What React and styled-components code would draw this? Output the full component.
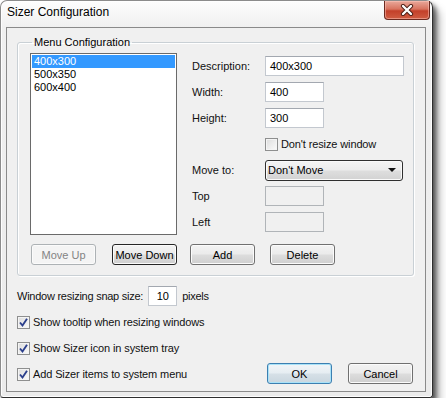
import React from 'react'
import styled, { createGlobalStyle, css } from 'styled-components'

const GlobalStyle = createGlobalStyle`
  html, body {
    margin: 0;
    padding: 0;
    background: #ffffff;
  }
  body {
    font-family: "Liberation Sans", Arial, sans-serif;
    font-size: 11px;
    color: #111;
  }
`

const sizes = ['400x300', '500x350', '600x400']

const App = () => {
  return (
    <>
      <GlobalStyle />
      <Window>
        <TitleBar>
          <Title>Sizer Configuration</Title>
          <CloseButton>
            <svg width="14" height="12" viewBox="0 0 14 12">
              <path d="M3 2 L11 10 M11 2 L3 10" stroke="#4a1d14" strokeWidth="4.2" strokeLinecap="round" />
              <path d="M3 2 L11 10 M11 2 L3 10" stroke="#ffffff" strokeWidth="2.4" strokeLinecap="round" />
            </svg>
          </CloseButton>
        </TitleBar>
        <Client>
          <Group>
            <Legend>Menu Configuration</Legend>
            <GroupGrid>
              <ListBox>
                {sizes.map((s, i) => (
                  <ListItem key={s} selected={i === 0}>{s}</ListItem>
                ))}
              </ListBox>
              <Form>
                <FormRow>
                  <Label>Description:</Label>
                  <TextBox width={139}>400x300</TextBox>
                </FormRow>
                <FormRow>
                  <Label>Width:</Label>
                  <TextBox width={59}>400</TextBox>
                </FormRow>
                <FormRow>
                  <Label>Height:</Label>
                  <TextBox width={59}>300</TextBox>
                </FormRow>
                <FormRow>
                  <Label />
                  <CheckRow>
                    <CheckBox />
                    <span>Don't resize window</span>
                  </CheckRow>
                </FormRow>
                <FormRow>
                  <Label>Move to:</Label>
                  <ComboBox>
                    <span>Don't Move</span>
                    <Arrow />
                  </ComboBox>
                </FormRow>
                <FormRow>
                  <Label>Top</Label>
                  <TextBox width={59} disabled />
                </FormRow>
                <FormRow>
                  <Label>Left</Label>
                  <TextBox width={59} disabled />
                </FormRow>
              </Form>
              <ButtonRow indent={1}>
                <Button variant="disabled">Move Up</Button>
                <Button variant="focused">Move Down</Button>
              </ButtonRow>
              <ButtonRow>
                <Button>Add</Button>
                <Button>Delete</Button>
              </ButtonRow>
            </GroupGrid>
          </Group>
          <Bottom>
            <Options>
              <SnapRow>
                <span>Window resizing snap size:</span>
                <TextBox width={29} center>10</TextBox>
                <span>pixels</span>
              </SnapRow>
              <CheckRow tall>
                <CheckBox checked />
                <span>Show tooltip when resizing windows</span>
              </CheckRow>
              <CheckRow tall>
                <CheckBox checked />
                <span>Show Sizer icon in system tray</span>
              </CheckRow>
              <CheckRow tall>
                <CheckBox checked />
                <span>Add Sizer items to system menu</span>
              </CheckRow>
            </Options>
            <Actions>
              <Button variant="default">OK</Button>
              <Button>Cancel</Button>
            </Actions>
          </Bottom>
        </Client>
      </Window>
    </>
  )
}

export default App

const CheckBox = ({ checked }) => (
  <Box>
    {checked && (
      <svg width="11" height="11" viewBox="0 0 11 11">
        <path d="M2 5.5 L4.5 8.5 L9 1.8" fill="none" stroke="#2b3f8c" strokeWidth="1.9" />
      </svg>
    )}
  </Box>
)

const Window = styled.div`
  width: 433px;
  height: 398px;
  box-sizing: border-box;
  display: flex;
  flex-direction: column;
  padding: 0 6px 5px 5px;
  border: 1px solid #8c8c8c;
  border-right-color: #2e2e2e;
  border-bottom-color: #2e2e2e;
  border-radius: 7px 7px 3px 3px;
  background: linear-gradient(#fdfdfd, #f0f0f0 26px, #ebebeb);
  box-shadow: inset 0 0 0 1px rgba(255,255,255,0.9), 3px 4px 5px rgba(0,0,0,0.6), 7px 9px 9px rgba(0,0,0,0.25);
`

const TitleBar = styled.div`
  height: 26px;
  display: flex;
  align-items: flex-start;
  justify-content: space-between;
`

const Title = styled.div`
  font-size: 12px;
  color: #000;
  padding: 4px 0 0 1px;
  text-shadow: 0 0 6px #fff;
`

const CloseButton = styled.div`
  width: 46px;
  height: 19px;
  margin-right: -4px;
  box-sizing: border-box;
  display: flex;
  align-items: center;
  justify-content: center;
  border: 1px solid #6b2a20;
  border-top: none;
  border-radius: 0 0 4px 4px;
  background: linear-gradient(#e9a99b 0%, #d8735f 45%, #c3402a 55%, #cf5c42 100%);
  box-shadow: inset 0 0 0 1px rgba(255,200,190,0.5);
`

const Client = styled.div`
  flex: 1;
  display: flex;
  flex-direction: column;
  background: #f0f0f0;
  border: 1px solid #8a8a8a;
`

const Group = styled.fieldset`
  margin: 7px 11px 0 10px;
  padding: 4px 10px 10px 12px;
  border: 1px solid #c9d0d5;
  border-radius: 3px;
  box-shadow: inset 1px 1px 0 #fff, 1px 1px 0 #fff;
  min-width: 0;
`

const Legend = styled.legend`
  margin-left: 2px;
  padding: 0 2px;
  line-height: 14px;
  font-size: 11px;
  color: #000;
`

const GroupGrid = styled.div`
  display: grid;
  grid-template-columns: 147px 1fr;
  grid-template-rows: 182px 21px;
  column-gap: 13px;
  row-gap: 9px;
`

const ListBox = styled.div`
  box-sizing: border-box;
  border: 1px solid #6a6a6a;
  background: #fff;
  padding: 1px;
`

const ListItem = styled.div`
  height: 13px;
  line-height: 13px;
  padding-left: 2px;
  color: #000;
  ${p => p.selected && css`
    background: #3399ff;
    color: #fff;
  `}
`

const Form = styled.div`
  display: flex;
  flex-direction: column;
  gap: 6px;
  padding-top: 3px;
`

const FormRow = styled.div`
  height: 20px;
  display: flex;
  align-items: center;
`

const Label = styled.div`
  width: 75px;
  flex: none;
  box-sizing: border-box;
  padding-left: 2px;
  color: #111;
`

const TextBox = styled.div`
  width: ${p => p.width}px;
  height: 20px;
  box-sizing: border-box;
  display: flex;
  align-items: center;
  justify-content: ${p => (p.center ? 'center' : 'flex-start')};
  padding: 0 4px;
  border: 1px solid #c3c8cf;
  border-top-color: #a3a8b0;
  background: ${p => (p.disabled ? '#f0f0f0' : '#fff')};
  ${p => p.disabled && css`
    border-color: #b0b4b8;
  `}
  color: #000;
`

const CheckRow = styled.div`
  display: flex;
  align-items: center;
  gap: 3px;
  height: ${p => (p.tall ? '20px' : 'auto')};
  color: #111;
  letter-spacing: -0.12px;
`

const Box = styled.span`
  width: 13px;
  height: 13px;
  box-sizing: border-box;
  flex: none;
  display: flex;
  align-items: center;
  justify-content: center;
  border: 1px solid #8e8f8f;
  background: linear-gradient(135deg, #dcdcdc, #fbfbfb);
  box-shadow: inset 0 0 0 1px #f4f4f4;
`

const ComboBox = styled.div`
  width: 138px;
  height: 21px;
  box-sizing: border-box;
  display: flex;
  align-items: center;
  justify-content: space-between;
  padding: 0 6px 0 2px;
  border: 1px solid #2f2f2f;
  border-radius: 3px;
  background: linear-gradient(#f4f4f4 0%, #ececec 48%, #dedede 52%, #d2d2d2 100%);
  box-shadow: inset 0 0 0 1px #fafafa;
  color: #000;
`

const Arrow = styled.span`
  width: 0;
  height: 0;
  border-left: 4px solid transparent;
  border-right: 4px solid transparent;
  border-top: 4px solid #111;
`

const ButtonRow = styled.div`
  display: flex;
  justify-content: ${p => (p.indent ? 'space-between' : 'flex-start')};
  padding-left: ${p => (p.indent ? 1 : 0)}px;
  gap: 15px;
`

const Button = styled.div`
  width: 65px;
  height: 21px;
  box-sizing: border-box;
  display: flex;
  align-items: center;
  justify-content: center;
  border: 1px solid #707070;
  border-radius: 3px;
  background: linear-gradient(#f3f3f3 0%, #ebebeb 48%, #dddddd 52%, #cfcfcf 100%);
  box-shadow: inset 0 0 0 1px #fbfbfb;
  color: #000;
  ${p => p.variant === 'disabled' && css`
    border-color: #adb2b5;
    background: #f4f4f4;
    color: #838383;
  `}
  ${p => p.variant === 'focused' && css`
    border-color: #262626;
  `}
  ${p => p.variant === 'default' && css`
    border-color: #3c7fb1;
    background: linear-gradient(#f1f5f8 0%, #e6edf2 48%, #d6e0e7 52%, #c9d6df 100%);
    box-shadow: inset 0 0 0 1px #a9e2f8;
  `}
`

const Bottom = styled.div`
  flex: 1;
  display: flex;
  justify-content: space-between;
  align-items: flex-end;
  padding: 9px 12px 7px 10px;
`

const Options = styled.div`
  display: flex;
  flex-direction: column;
  gap: 6px;
`

const SnapRow = styled.div`
  height: 20px;
  display: flex;
  align-items: center;
  gap: 5px;
  color: #111;
  letter-spacing: -0.25px;
`

const Actions = styled.div`
  display: flex;
  gap: 16px;
`
